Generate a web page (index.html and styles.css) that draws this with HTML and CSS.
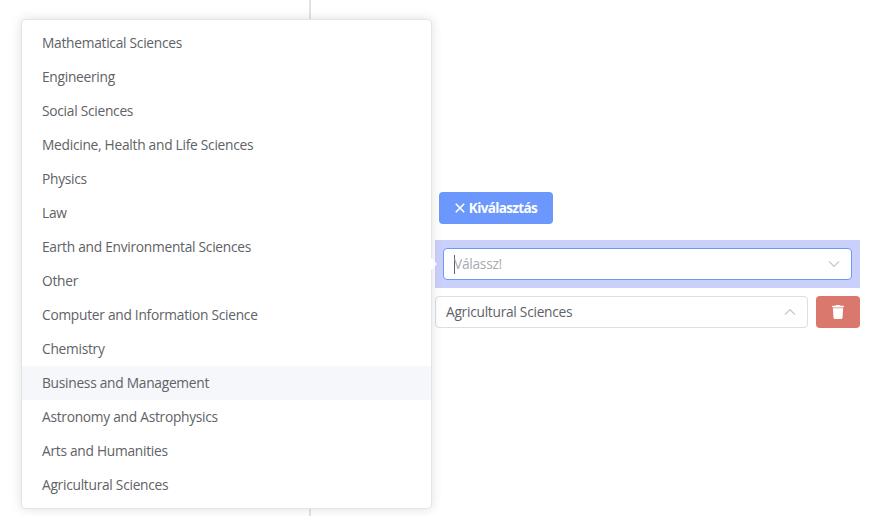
FILE: index.html
```html
<!DOCTYPE html>
<html lang="hu">
<head>
<meta charset="utf-8">
<title>Kiválasztás</title>
<link rel="stylesheet" href="styles.css">
</head>
<body>
<main class="page">
  <aside class="side"></aside>
  <section class="form">
    <button class="btn btn-primary">
      <svg width="10" height="10" viewBox="0 0 10 10" fill="none" stroke="currentColor" stroke-width="1.600"><path d="M.8.8l8.400 8.400M9.200.8L.8 9.200"/></svg>
      <span>Kiválasztás</span>
    </button>
    <div class="active-row">
      <div class="select focused">
        <span class="caret"></span><span class="placeholder">Válassz!</span>
        <svg class="chevron" width="12" height="8" viewBox="0 0 12 8" fill="none" stroke="currentColor" stroke-width="1.200"><path d="M1 1.300l5 5 5-5"/></svg>
      </div>
    </div>
    <div class="row">
      <div class="select">
        <span class="value">Agricultural Sciences</span>
        <svg class="chevron" width="12" height="8" viewBox="0 0 12 8" fill="none" stroke="currentColor" stroke-width="1.200"><path d="M1 6.700l5-5 5 5"/></svg>
      </div>
      <button class="btn btn-danger" aria-label="Delete">
        <svg width="14" height="14" viewBox="0 0 14 14" fill="currentColor"><path d="M4.500.7Q4.600 0 5.300 0h3.400q.7 0 .8.7h2.700q.8 0 .8.8V2H1v-.5q0-.8.8-.8z"/><path opacity=".5" d="M1.700 2h10.600v1.200H1.700z"/><path d="M1.900 3.200h10.200l-.6 9.600q-.1 1.200-1.300 1.200H3.800q-1.200 0-1.300-1.200z"/></svg>
      </button>
    </div>
  </section>
  <div class="popup">
    <ul class="options">
      <li>Mathematical Sciences</li>
      <li>Engineering</li>
      <li>Social Sciences</li>
      <li>Medicine, Health and Life Sciences</li>
      <li>Physics</li>
      <li>Law</li>
      <li>Earth and Environmental Sciences</li>
      <li>Other</li>
      <li>Computer and Information Science</li>
      <li>Chemistry</li>
      <li class="hover">Business and Management</li>
      <li>Astronomy and Astrophysics</li>
      <li>Arts and Humanities</li>
      <li>Agricultural Sciences</li>
    </ul>
    <span class="arrow"></span>
  </div>
</main>
</body>
</html>
```
FILE: styles.css
```css
* { box-sizing: border-box; }
body {
  margin: 0;
  background: #fff;
  color: #606266;
  font: 13.75px/34px "Open Sans", "Noto Sans", sans-serif;
  letter-spacing: -.27px;
}
.page {
  position: relative;
  display: flex;
  height: 516px;
  overflow: hidden;
}
.side {
  width: 311px;
  border-right: 2px solid #e0e2ea;
}
.form {
  display: flex;
  flex-direction: column;
  align-items: stretch;
  width: 425px;
  margin-left: 124px;
  padding-top: 192px;
}
.btn {
  display: flex;
  align-items: center;
  justify-content: center;
  height: 32px;
  padding: 0;
  border: 0;
  border-radius: 4px;
  color: #fff;
  font: inherit;
}
.btn-primary {
  width: 114px;
  margin: 0 0 16px 4px;
  gap: 4px;
  background: #6c98fd;
  font-size: 13.5px;
  font-weight: 700;
  letter-spacing: -.62px;
}
.active-row {
  padding: 8px;
  margin-bottom: 8px;
  background: #cad0fc;
}
.row {
  display: flex;
  gap: 8px;
}
.select {
  display: flex;
  flex: 1;
  align-items: center;
  height: 32px;
  padding: 0 11px 0 10px;
  border: 1px solid #dcdfe6;
  border-radius: 4px;
  background: #fff;
}
.focused { border-color: #6c98fd; }
.caret {
  width: 1px;
  height: 19px;
  margin-right: -1px;
  background: #606266;
}
.placeholder { color: #a8abb2; }
.chevron {
  margin-left: auto;
  color: #c0c4cc;
}
.btn-danger {
  width: 44px;
  background: #da786e;
}
.popup {
  position: absolute;
  top: 19px;
  left: 21px;
  width: 411px;
  height: 490px;
  border: 1px solid #e4e4e6;
  border-radius: 4px;
  background: #fff;
  box-shadow: 0 0 12px rgba(0, 0, 0, .12);
}
.options {
  margin: 0;
  padding: 6px 0;
  list-style: none;
}
.options li {
  height: 34px;
  padding: 0 20px;
}
.options .hover { background: #f5f7fa; }
.arrow {
  position: absolute;
  top: 238px;
  right: -6px;
  border: 6px solid transparent;
  border-left-color: #fff;
  border-right: 0;
}
```
